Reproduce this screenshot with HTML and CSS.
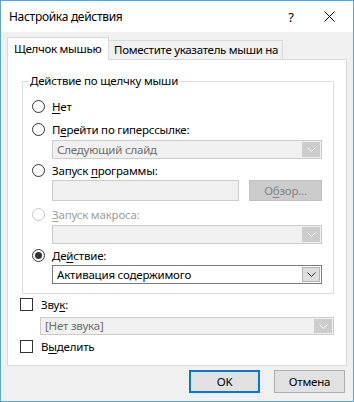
FILE: index.html
```html
<!DOCTYPE html>
<html lang="ru">
<head>
<meta charset="utf-8">
<title>Настройка действия</title>
<link rel="stylesheet" href="styles.css">
</head>
<body>
<div class="window">
  <div class="titlebar">
    <span class="title">Настройка действия</span>
    <span class="help">?</span>
    <span class="close"><svg width="11" height="11" viewBox="0 0 11 11"><path d="M0.5 0.5 L10.5 10.5 M10.5 0.5 L0.5 10.5" stroke="#000" stroke-width="1" fill="none"/></svg></span>
  </div>
  <div class="client">
    <div class="tabs">
      <div class="tab active">Щелчок мышью</div>
      <div class="tab">Поместите указатель мыши на</div>
    </div>
    <div class="panel">
      <fieldset class="group">
        <legend>Действие по щелчку мыши</legend>
        <div class="opt r1"><span class="radio"></span><span><u>Н</u>ет</span></div>
        <div class="opt r2"><span class="radio"></span><span>П<u>е</u>рейти по гиперссылке:</span></div>
        <div class="combo disabled c1"><span class="ctext">Следующий слайд</span><span class="arrow"><svg width="9" height="5" viewBox="0 0 9 5"><path d="M0.5 0.5 L4.5 4.5 L8.5 0.5" stroke="#fff" fill="none"/></svg></span></div>
        <div class="opt r3"><span class="radio"></span><span>Запуск <u>п</u>рограммы:</span></div>
        <div class="browse-row">
          <span class="textbox"></span>
          <span class="btn disabled">О<u>б</u>зор...</span>
        </div>
        <div class="opt r4 off"><span class="radio"></span><span><u>З</u>апуск макроса:</span></div>
        <div class="combo disabled c3"><span class="ctext"></span><span class="arrow"><svg width="9" height="5" viewBox="0 0 9 5"><path d="M0.5 0.5 L4.5 4.5 L8.5 0.5" stroke="#fff" fill="none"/></svg></span></div>
        <div class="opt r5"><span class="radio checked"></span><span>Де<u>й</u>ствие:</span></div>
        <div class="combo c4"><span class="ctext">Активация содержимого</span><span class="arrow"><svg width="9" height="5" viewBox="0 0 9 5"><path d="M0.5 0.5 L4.5 4.5 L8.5 0.5" stroke="#333" fill="none"/></svg></span></div>
      </fieldset>
      <div class="chk sound"><span class="box"></span><span>Зву<u>к</u>:</span></div>
      <div class="combo disabled c5"><span class="ctext">[Нет звука]</span><span class="arrow"><svg width="9" height="5" viewBox="0 0 9 5"><path d="M0.5 0.5 L4.5 4.5 L8.5 0.5" stroke="#fff" fill="none"/></svg></span></div>
      <div class="chk hl"><span class="box"></span><span>В<u>ы</u>делить</span></div>
    </div>
    <div class="buttons">
      <span class="btn default">OK</span>
      <span class="btn">Отмена</span>
    </div>
  </div>
</div>
</body>
</html>
```

FILE: styles.css
```css
* { box-sizing: border-box; }
html, body { margin: 0; padding: 0; }
body {
  width: 354px;
  height: 402px;
  overflow: hidden;
  font-family: "Noto Sans", "Open Sans", sans-serif;
  font-size: 11.5px;
  letter-spacing: -0.2px;
  color: #000;
}
u { text-decoration-thickness: 1px; text-underline-offset: 2px; }

.window {
  width: 354px;
  height: 402px;
  border: 1px solid #54a6dc;
  background: #f0f0f0;
  display: flex;
  flex-direction: column;
}
.titlebar {
  flex: none;
  height: 31px;
  background: #fff;
  display: flex;
  align-items: center;
  padding-left: 8px;
}
.title { flex: 1; font-size: 12px; letter-spacing: -0.3px; }
.help { width: 12px; font-size: 13px; margin-right: 27px; text-align: center; }
.close { width: 11px; height: 11px; margin-right: 18px; display: flex; }

.client {
  flex: 1;
  padding: 5px 6px 0 6px;
  display: flex;
  flex-direction: column;
}
.tabs {
  display: flex;
  align-items: flex-end;
  margin-bottom: -1px;
  position: relative;
  z-index: 1;
}
.tab {
  height: 20px;
  border: 1px solid #d9d9d9;
  background: #f0f0f0;
  display: flex;
  align-items: center;
  padding: 0 5px 1px;
  width: 175px;
  margin-left: -1px;
  white-space: nowrap;
  letter-spacing: -0.3px;
}
.tab.active {
  height: 23px;
  width: 102px;
  margin-left: 0;
  background: #fff;
  border-bottom: none;
  padding: 0 6px 2px;
}

.panel {
  flex: none;
  height: 307px;
  background: #fff;
  border: 1px solid #d9d9d9;
  display: flex;
  flex-direction: column;
}
.group {
  margin: 13px 0 0 14px;
  width: 312px;
  min-width: 0;
  border: 1px solid #dcdcdc;
  padding: 0 0 9px 0;
}
.group legend {
  margin-left: 5px;
  padding: 0 2px;
  line-height: 16px;
  height: 16px;
}
.opt {
  display: flex;
  align-items: center;
  gap: 7px;
  height: 18px;
  padding-left: 9px;
}
.opt.off { color: #a0a0a0; }
.r1 { margin-top: 8px; }
.r2 { margin-top: 5px; }
.r3 { margin-top: 2px; }
.r4 { margin-top: 4px; }
.r5 { margin-top: 2px; }

.radio {
  flex: none;
  width: 13px;
  height: 13px;
  border: 1px solid #333;
  border-radius: 50%;
  background: #fff;
  display: flex;
  align-items: center;
  justify-content: center;
}
.opt.off .radio { border-color: #c6c6c6; }
.radio.checked::after {
  content: "";
  width: 7px;
  height: 7px;
  border-radius: 50%;
  background: #333;
}

.combo {
  display: flex;
  height: 19px;
  margin-left: 29px;
  width: 270px;
  border: 1px solid #7a7a7a;
  background: #fff;
}
.combo .ctext {
  flex: 1;
  padding-left: 4px;
  line-height: 17px;
  white-space: nowrap;
}
.combo .arrow {
  flex: none;
  width: 18px;
  margin: 1px 1px 1px 0;
  background: #dedede;
  border: 1px solid #b4b4b4;
  display: flex;
  align-items: center;
  justify-content: center;
}
.combo.disabled {
  border-color: #cccccc;
  background: #f0f0f0;
  color: #6d6d6d;
}
.combo.disabled .arrow {
  background: #cccccc;
  border-color: #cccccc;
}
.c1 { margin-top: 2px; }
.c3 { margin-top: 2px; }
.c4 { margin-top: 1px; }

.browse-row {
  display: flex;
  margin: 1px 0 0 29px;
  gap: 10px;
  height: 21px;
}
.textbox {
  width: 187px;
  height: 21px;
  border: 1px solid #cccccc;
  background: #f0f0f0;
}

.btn {
  display: flex;
  align-items: center;
  justify-content: center;
  width: 73px;
  height: 21px;
  border: 1px solid #adadad;
  background: #e1e1e1;
}
.btn.disabled {
  border-color: #bfbfbf;
  background: #cccccc;
  color: #838383;
}

.chk {
  display: flex;
  align-items: center;
  gap: 8px;
  height: 18px;
  margin-left: 12px;
}
.chk .box {
  flex: none;
  width: 13px;
  height: 13px;
  border: 1px solid #333;
  background: #fff;
}
.sound { margin-top: 1px; }
.c5 { margin: 4px 0 0 32px; width: 294px; height: 18px; }
.c5 .ctext { line-height: 16px; }
.hl { margin-top: 2px; }

.buttons {
  display: flex;
  justify-content: flex-end;
  gap: 14px;
  margin-top: 4px;
  padding-right: 2px;
}
.buttons .btn { width: 71px; height: 23px; }
.buttons .btn.default { border: 2px solid #0078d7; }
```
